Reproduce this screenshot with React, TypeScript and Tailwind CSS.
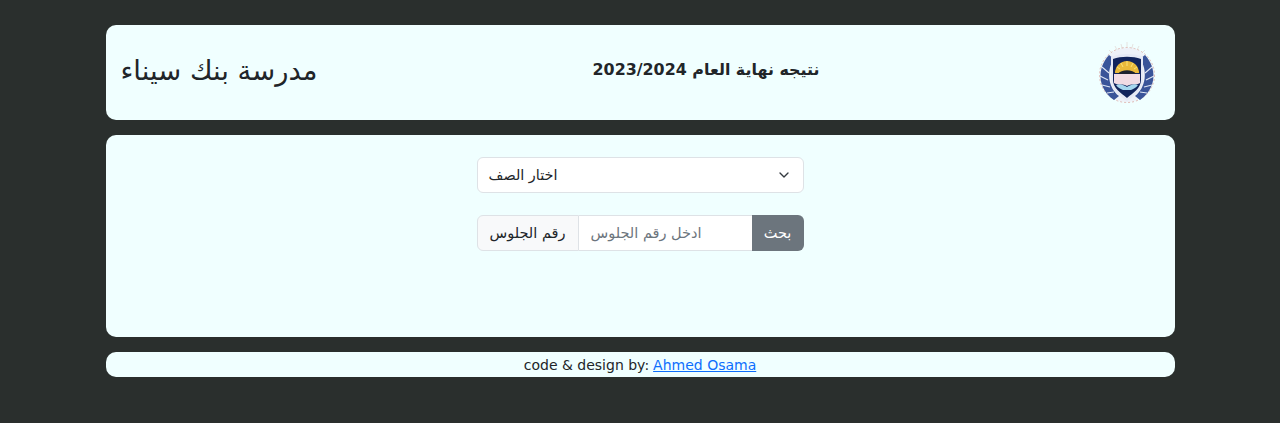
import React from 'react';
import { ChevronDown } from 'lucide-react';

const Logo = () => (
  <svg width="60" height="62" viewBox="0 0 60 62">
    <g stroke="#e2dcd8" strokeWidth="0.8">
      <path d="M30 13V0M27 13L24 2M33 13L36 2M23 14L18 4M37 14L42 4M19 15L12 8M41 15L48 8" />
    </g>
    <circle cx="30" cy="33" r="27" fill="#eef1f8" />
    <circle cx="30" cy="33" r="27.5" fill="none" stroke="#e0b8b4" strokeWidth="1" strokeDasharray="2 2" />
    <path d="M12 13C0 26 0 46 17 58L22 54C11 46 9 28 17 17Z" fill="#3a5499" />
    <path d="M48 13C60 26 60 46 43 58L38 54C49 46 51 28 43 17Z" fill="#3a5499" />
    <path d="M5 25L12 31M3 34L11 38M5 43L13 45M10 51L17 50M55 25L48 31M57 34L49 38M55 43L47 45M50 51L43 50" stroke="#dfe6f5" strokeWidth="1.1" />
    <path d="M14 15C22 11 38 11 46 15V38C46 48 37 54 30 59C23 54 14 48 14 38Z" fill="#e6e9f5" />
    <path d="M16 17C24 14 36 14 44 17V38C44 46 36 51 30 56C24 51 16 46 16 38Z" fill="#12245c" />
    <path d="M18 31A12 12 0 0 1 42 31Z" fill="#e9b93a" />
    <path d="M30 19V24M24 21L26 25M36 21L34 25M20 25L23 27M40 25L37 27" stroke="#f8e27a" strokeWidth="1" />
    <path d="M21 32C24 27 36 27 39 32Z" fill="#1c2230" />
    <path d="M17 32H43V41C39 44 34 41 30 44C26 41 21 44 17 41Z" fill="#f1dbe4" />
    <path d="M19 43C23 41 27 43 30 45C33 43 37 41 41 43C39 46 36 47 34 48H26C24 47 21 46 19 43Z" fill="#a6d6ee" />
  </svg>
);

export default function App() {
  return (
    <div className="min-h-[423px] bg-[#2a2f2d] pt-[25px] font-['DejaVu_Sans',sans-serif] text-[#212529]">
      <div className="mx-auto flex w-[1069px] flex-col gap-[15px]">
        <header className="flex h-[95px] items-center justify-between rounded-[10px] bg-[#f0ffff] pl-[15px] pr-[17px]">
          <h1 className="-mt-[4px] w-[197px] whitespace-nowrap text-[27.4px] leading-none" dir="rtl">مدرسة بنك سيناء</h1>
          <h2 className="-mt-[5px] -ml-[3px] text-[15.9px] font-bold leading-none" dir="rtl">نتيجه نهاية العام 2023/2024</h2>
          <Logo />
        </header>

        <main className="flex h-[202px] flex-col items-center rounded-[10px] bg-[#f0ffff] pt-[22px]">
          <div className="flex h-[36px] w-[327px] items-center justify-between rounded-[6px] border border-[#dee2e6] bg-white px-[11px]">
            <span className="pt-[2px] text-[14.4px]" dir="rtl">اختار الصف</span>
            <ChevronDown size={16} strokeWidth={2} className="text-[#343a40]" />
          </div>

          <div className="mt-[22px] flex h-[36px] w-[327px]">
            <div className="flex w-[102px] items-center justify-center rounded-l-[6px] border border-[#dee2e6] bg-[#f8f9fa] pt-[2px] text-[14.5px]">
              <span dir="rtl">رقم الجلوس</span>
            </div>
            <div className="flex flex-1 items-center border-y border-[#dee2e6] bg-white pl-[12px] pt-[2px] text-[14.5px] text-[#6c757d]">
              <span dir="rtl">ادخل رقم الجلوس</span>
            </div>
            <button className="w-[52px] rounded-r-[6px] bg-[#6c757d] pt-[2px] text-[14.5px] text-white">بحث</button>
          </div>
        </main>

        <footer className="flex h-[25px] items-center justify-center gap-[4px] rounded-[10px] bg-[#f0ffff] text-[14px] leading-none">
          <span>code &amp; design by:</span>
          <a href="#" className="text-[#0d6efd] underline">Ahmed Osama</a>
        </footer>
      </div>
    </div>
  );
}
